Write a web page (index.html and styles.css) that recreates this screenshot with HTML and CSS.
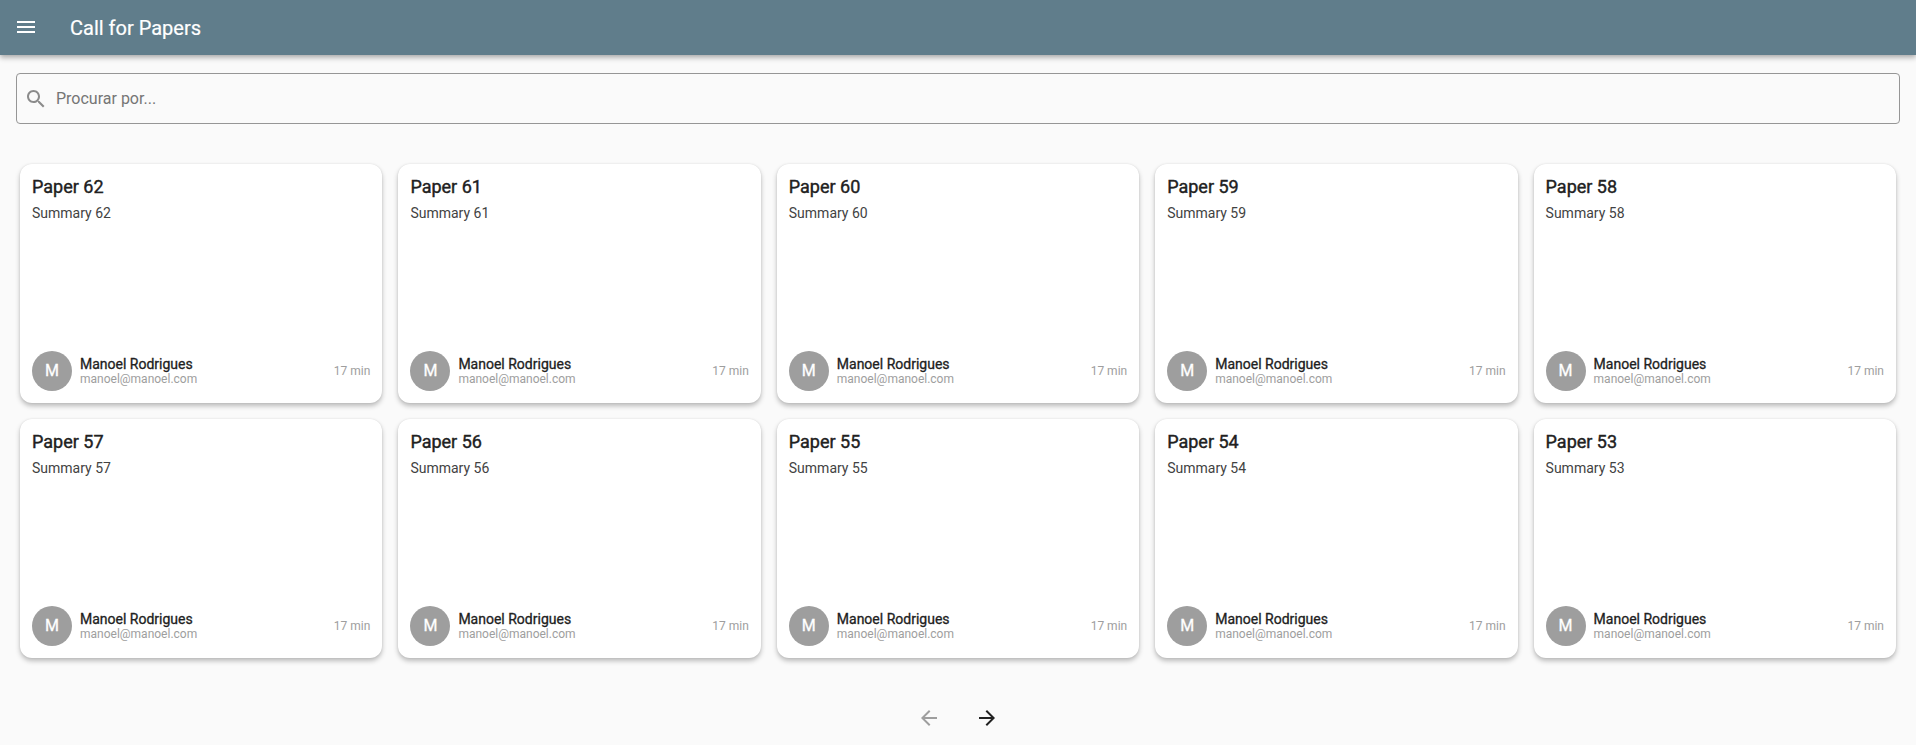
FILE: index.html
```
<!DOCTYPE html>
<html lang="pt-BR">
<head>
<meta charset="utf-8">
<title>Call for Papers</title>
<link rel="stylesheet" href="styles.css">
</head>
<body>
<header class="app-bar">
  <svg class="menu-icon" viewBox="0 0 24 24"><path d="M3 18h18v-2H3v2zm0-5h18v-2H3v2zm0-7v2h18V6H3z"/></svg>
  <h1 class="app-title">Call for Papers</h1>
</header>
<main class="content">
  <label class="search">
    <svg class="search-icon" viewBox="0 0 24 24"><path d="M15.5 14h-.79l-.28-.27C15.41 12.59 16 11.11 16 9.5 16 5.91 13.09 3 9.5 3S3 5.91 3 9.5 5.91 16 9.5 16c1.61 0 3.09-.59 4.23-1.57l.27.28v.79l5 4.99L20.49 19l-4.99-5zm-6 0C7.01 14 5 11.99 5 9.5S7.01 5 9.5 5 14 7.01 14 9.5 11.99 14 9.5 14z"/></svg>
    <input class="search-input" type="text" placeholder="Procurar por...">
  </label>
  <section class="grid">
    <article class="card"><h2 class="title">Paper 62</h2><p class="summary">Summary 62</p><footer class="author"><span class="avatar">M</span><div class="who"><span class="name">Manoel Rodrigues</span><span class="email">manoel@manoel.com</span></div><span class="time">17 min</span></footer></article>
    <article class="card"><h2 class="title">Paper 61</h2><p class="summary">Summary 61</p><footer class="author"><span class="avatar">M</span><div class="who"><span class="name">Manoel Rodrigues</span><span class="email">manoel@manoel.com</span></div><span class="time">17 min</span></footer></article>
    <article class="card"><h2 class="title">Paper 60</h2><p class="summary">Summary 60</p><footer class="author"><span class="avatar">M</span><div class="who"><span class="name">Manoel Rodrigues</span><span class="email">manoel@manoel.com</span></div><span class="time">17 min</span></footer></article>
    <article class="card"><h2 class="title">Paper 59</h2><p class="summary">Summary 59</p><footer class="author"><span class="avatar">M</span><div class="who"><span class="name">Manoel Rodrigues</span><span class="email">manoel@manoel.com</span></div><span class="time">17 min</span></footer></article>
    <article class="card"><h2 class="title">Paper 58</h2><p class="summary">Summary 58</p><footer class="author"><span class="avatar">M</span><div class="who"><span class="name">Manoel Rodrigues</span><span class="email">manoel@manoel.com</span></div><span class="time">17 min</span></footer></article>
    <article class="card"><h2 class="title">Paper 57</h2><p class="summary">Summary 57</p><footer class="author"><span class="avatar">M</span><div class="who"><span class="name">Manoel Rodrigues</span><span class="email">manoel@manoel.com</span></div><span class="time">17 min</span></footer></article>
    <article class="card"><h2 class="title">Paper 56</h2><p class="summary">Summary 56</p><footer class="author"><span class="avatar">M</span><div class="who"><span class="name">Manoel Rodrigues</span><span class="email">manoel@manoel.com</span></div><span class="time">17 min</span></footer></article>
    <article class="card"><h2 class="title">Paper 55</h2><p class="summary">Summary 55</p><footer class="author"><span class="avatar">M</span><div class="who"><span class="name">Manoel Rodrigues</span><span class="email">manoel@manoel.com</span></div><span class="time">17 min</span></footer></article>
    <article class="card"><h2 class="title">Paper 54</h2><p class="summary">Summary 54</p><footer class="author"><span class="avatar">M</span><div class="who"><span class="name">Manoel Rodrigues</span><span class="email">manoel@manoel.com</span></div><span class="time">17 min</span></footer></article>
    <article class="card"><h2 class="title">Paper 53</h2><p class="summary">Summary 53</p><footer class="author"><span class="avatar">M</span><div class="who"><span class="name">Manoel Rodrigues</span><span class="email">manoel@manoel.com</span></div><span class="time">17 min</span></footer></article>
  </section>
  <nav class="pager">
    <svg class="arrow disabled" viewBox="0 0 24 24"><path d="M20 11H7.83l5.59-5.59L12 4l-8 8 8 8 1.41-1.41L7.83 13H20v-2z"/></svg>
    <svg class="arrow" viewBox="0 0 24 24"><path d="M12 4l-1.41 1.41L16.17 11H4v2h12.17l-5.58 5.59L12 20l8-8z"/></svg>
  </nav>
</main>
</body>
</html>
```
FILE: styles.css
```
* { box-sizing: border-box; }

body {
  margin: 0;
  height: 745px;
  overflow: hidden;
  background: #fafafa;
  color: #212121;
  font-family: Roboto, "Liberation Sans", sans-serif;
}

h1, h2, p { margin: 0; font-weight: 400; }

svg { display: block; width: 24px; height: 24px; flex: none; }

.app-bar {
  display: flex;
  align-items: center;
  height: 55px;
  padding: 0 14px;
  background: #607d8b;
  color: #fff;
  box-shadow: 0 3px 5px rgba(0, 0, 0, .28), 0 0 3px rgba(0, 0, 0, .08);
}

.menu-icon { fill: #fff; margin: 0 32px 1px 0; }

.app-title { font-size: 20px; line-height: 24px; -webkit-text-stroke: .2px; }

.content { padding: 18px 16px 0; }

.search {
  display: flex;
  align-items: center;
  height: 51px;
  padding-left: 7px;
  border: 1px solid #969696;
  border-radius: 4px;
}

.search-icon { fill: #8b8b8b; }

.search-input {
  flex: 1;
  margin-left: 8px;
  padding: 0;
  border: 0;
  outline: 0;
  background: none;
  font: 16px/20px Roboto, "Liberation Sans", sans-serif;
}

.search-input::placeholder { color: #757575; opacity: 1; }

.grid {
  display: grid;
  grid-template-columns: repeat(5, 1fr);
  grid-auto-rows: 239px;
  gap: 16px;
  padding: 40px 4px 0;
}

.card {
  display: flex;
  flex-direction: column;
  padding: 12px;
  border-radius: 12px;
  background: #fff;
  box-shadow: 0 3px 5px rgba(0, 0, 0, .25), 0 0 2px rgba(0, 0, 0, .1);
}

.title {
  font-size: 18px;
  line-height: 22px;
  -webkit-text-stroke: .4px;
}

.summary {
  margin-top: 6px;
  font-size: 14px;
  line-height: 18px;
  color: #424242;
}

.author { display: flex; align-items: center; margin-top: auto; }

.avatar {
  display: flex;
  align-items: center;
  justify-content: center;
  width: 40px;
  height: 40px;
  padding-bottom: 1px;
  border-radius: 50%;
  background: #9e9e9e;
  color: #fff;
  font-size: 16px;
  -webkit-text-stroke: .3px;
}

.who { display: flex; flex-direction: column; margin-left: 8px; }

.name { font-size: 14px; line-height: 16px; -webkit-text-stroke: .3px; }

.email { font-size: 12px; line-height: 14px; color: #9e9e9e; }

.time { margin-left: auto; font-size: 12px; line-height: 14px; color: #9e9e9e; }

.pager { display: flex; justify-content: center; gap: 34px; padding-top: 48px; }

.arrow { fill: #212121; }

.disabled { fill: #9e9e9e; }
```
